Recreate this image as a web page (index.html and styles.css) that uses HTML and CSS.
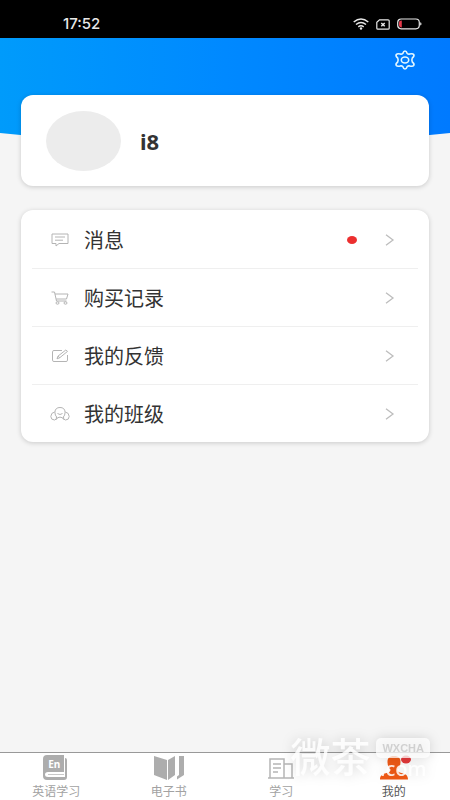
FILE: index.html
```
<!DOCTYPE html>
<html lang="zh-CN">
<head>
<meta charset="utf-8">
<meta name="viewport" content="width=device-width, initial-scale=1">
<title>我的</title>
<link rel="stylesheet" href="styles.css">
</head>
<body>
<div class="status">
  <span class="clock">17:52</span>
  <div class="status-icons">
    <svg width="16" height="12" viewBox="0 0 16 12" fill="none" stroke="#e8e8e8" stroke-width="1.5"><path d="M.7 4Q8-2 15.300 4M3 6.500q5-4 10 0M5.300 8.800q2.700-2 5.400 0"/><circle cx="8" cy="10.500" r="1.200" fill="#e8e8e8" stroke="none"/></svg>
    <svg width="14" height="11" viewBox="0 0 14 11" fill="none" stroke="#e8e8e8" stroke-width="1.200"><path d="M3.500.8H12q1.200 0 1.200 1v7.400q0 1-1.200 1H2q-1.200 0-1.200-1V3.200z"/><path d="m5.300 4 3.400 3.200m0-3.200L5.300 7.200" stroke-width="1.500"/></svg>
    <svg width="25" height="12" viewBox="0 0 25 12"><rect x=".7" y="1" width="21.600" height="9.800" rx="3.500" fill="none" stroke="#e8e8e8" stroke-width="1.200"/><path d="M4.800 2.400v7Q2 9.400 2 7V4.800Q2 2.400 4.800 2.400z" fill="#e5394a"/><path d="M23.200 4.200q1.300.4 1.300 1.700t-1.300 1.700z" fill="#e8e8e8"/></svg>
  </div>
</div>
<main class="page">
  <svg class="hero" viewBox="0 0 450 108" preserveAspectRatio="none" aria-hidden="true">
    <defs><linearGradient id="sky" x1="0" y1="0" x2="450" y2="0" gradientUnits="userSpaceOnUse"><stop offset="0" stop-color="#009bfb"/><stop offset=".5" stop-color="#0089ff"/><stop offset="1" stop-color="#007aff"/></linearGradient></defs>
    <path d="M0 0H450V95Q225 120 0 95z" fill="url(#sky)"/>
  </svg>
  <div class="toolbar">
    <button class="settings" type="button" aria-label="设置">
      <svg width="22" height="20" viewBox="0 0 22 20" fill="none" stroke="#e2f6ff" stroke-width="1.600" stroke-linejoin="round"><path d="M8.800 3.500Q9.500 1 11 1t2.200 2.500q1 .9 2.300.6 3.200-.9 4.200.4 1 1.600-1.400 3.500-.9 2 0 4 2.400 1.900 1.400 3.500-1 1.300-4.200.4-1.300-.3-2.300.6Q12.500 19 11 19t-2.200-2.500q-1-.9-2.300-.6-3.200.9-4.200-.4-1-1.600 1.400-3.500.9-2 0-4-2.400-1.900-1.400-3.500 1-1.300 4.200-.4 1.300.3 2.300-.6z"/><ellipse cx="11" cy="10" rx="3.700" ry="3"/></svg>
    </button>
  </div>
  <section class="card profile">
    <div class="avatar"></div>
    <h1 class="name">i8</h1>
  </section>
  <nav class="card menu">
    <a class="row" href="#messages">
      <svg class="row-icon" width="20" height="16" viewBox="0 0 20 16"><path d="M2 2h16v9.500H9L6 14v-2.500H2zM5 5h10M5 8.200h8"/></svg>
      <span class="row-label">消息</span><span class="dot"></span>
      <svg class="chevron" width="10" height="12" viewBox="0 0 10 12"><path d="m1 .7 7 5.300-7 5.300"/></svg>
    </a>
    <a class="row" href="#orders">
      <svg class="row-icon" width="20" height="16" viewBox="0 0 20 16"><path d="M1.500 2h3l2 9h10M5 4h13l-1.500 5H6.200"/><ellipse cx="7.500" cy="13" rx="1.500" ry="1.200"/><ellipse cx="15.500" cy="13" rx="1.500" ry="1.200"/></svg>
      <span class="row-label">购买记录</span>
      <svg class="chevron" width="10" height="12" viewBox="0 0 10 12"><path d="m1 .7 7 5.300-7 5.300"/></svg>
    </a>
    <a class="row" href="#feedback">
      <svg class="row-icon" width="20" height="16" viewBox="0 0 20 16"><path d="M12 2.500H4q-1.500 0-1.500 1.300v8.400q0 1.300 1.500 1.300h12q1.500 0 1.500-1.300V7M7 10.800l.9-2.600L15.800 2l1.700 1.400-7.700 6.300zM8 8.200l1.800 1.500"/></svg>
      <span class="row-label">我的反馈</span>
      <svg class="chevron" width="10" height="12" viewBox="0 0 10 12"><path d="m1 .7 7 5.300-7 5.300"/></svg>
    </a>
    <a class="row" href="#class">
      <svg class="row-icon" width="20" height="16" viewBox="0 0 20 16"><path d="M4.900 6.200Q5.200 1.500 10 1.500t5.100 4.700M6.800 11.200Q4.900 9.500 4.900 6.200M13.200 11.200q1.900-1.700 1.900-5M7.500 7.500q2.500 2 5 0M4.700 6Q1 6.500.8 10.500 1 14 4.500 14q2.500-.3 2-3M15.300 6q3.700.5 3.900 4.500-.2 3.500-3.700 3.500-2.500-.3-2-3M6.500 13.500q.2-2.200 3.500-2.400 3.300.2 3.500 2.400"/></svg>
      <span class="row-label">我的班级</span>
      <svg class="chevron" width="10" height="12" viewBox="0 0 10 12"><path d="m1 .7 7 5.300-7 5.300"/></svg>
    </a>
  </nav>
</main>
<footer class="tabs">
  <a class="tab" href="#english">
    <span class="book"><svg width="28" height="26" viewBox="0 0 28 26"><path d="M5 0h17v17H6q-3 0-3 2.500T6 22h17V3q2 0 2 2v17q0 3-3 3H5q-4 0-4-4V4q0-4 4-4z" fill="#adadad"/><path d="M6 19.500h16" stroke="#c8c8c8" fill="none"/></svg><b class="book-text">En</b></span>
    <span>英语学习</span>
  </a>
  <a class="tab" href="#ebooks">
    <svg width="32" height="26" viewBox="0 0 32 26" fill="#adadad"><path d="m1 1 13 4v20L1 20zM22 1v19l-7 5V5zM26 1h5v19l-7 4.500v-3l2-1.500z"/></svg>
    <span>电子书</span>
  </a>
  <a class="tab" href="#study">
    <svg width="28" height="26" viewBox="0 0 28 26" fill="none" stroke="#b5b5b5" stroke-width="1.500"><path d="M3 23V4h14v19M17 9h8v14M1 23h26M6 9h8M6 13h8M6 17h5"/></svg>
    <span>学习</span>
  </a>
  <a class="tab active" href="#mine">
    <svg width="34" height="26" viewBox="0 0 34 26"><path d="M17 1c5 0 6.500 2.500 6.500 6 0 4-1.500 6-3 7.500 0 2 1 2.800 4 3.500 5 1 6.500 3 6.500 6.500H3c0-3.500 1.500-5.500 6.500-6.500 3-.7 4-1.500 4-3.500-1.500-1.500-3-3.500-3-7.500 0-3.500 1.500-6 6.500-6z" fill="#f15a16"/><ellipse cx="29" cy="4.500" rx="5" ry="4" fill="#e5393b"/></svg>
    <span>我的</span>
  </a>
</footer>
<div class="watermark" aria-hidden="true">
  <span class="wm-main">微茶</span>
  <div class="wm-side"><span class="wm-bubble">WXCHA</span><span class="wm-com">.com</span></div>
</div>
</body>
</html>
```
FILE: styles.css
```
* { box-sizing: border-box; }
body {
  margin: 0;
  min-height: 100vh;
  display: flex;
  flex-direction: column;
  position: relative;
  background: #f5f5f5;
  color: #333;
  font-family: "Noto Sans", "Noto Sans CJK SC", sans-serif;
}
svg { display: block; flex: none; }
a { color: inherit; text-decoration: none; }
.status {
  height: 38px;
  padding: 10px 28px 0 63px;
  display: flex;
  align-items: center;
  justify-content: space-between;
  background: #000;
}
.clock {
  color: #e8e8e8;
  font: 500 15px/20px Inter, sans-serif;
}
.status-icons { display: flex; align-items: center; gap: 7px; }
.page {
  position: relative;
  flex: 1;
  padding: 0 21px 24px;
}
.hero {
  position: absolute;
  top: 0;
  left: 0;
  width: 100%;
  height: 108px;
}
.toolbar {
  position: relative;
  height: 57px;
  padding: 12px 13px 0 0;
  display: flex;
  justify-content: flex-end;
  align-items: flex-start;
}
.settings { padding: 0; border: 0; background: none; }
.card {
  position: relative;
  background: #fff;
  border-radius: 12px;
  box-shadow: 0 1px 5px rgba(0, 0, 0, .18);
}
.profile {
  height: 91px;
  padding: 0 25px;
  display: flex;
  align-items: center;
  gap: 19px;
}
.avatar {
  width: 75px;
  height: 60px;
  border-radius: 50%;
  background: #ececec;
}
.name {
  margin: 0;
  font-size: 22px;
  line-height: 28px;
  font-weight: 700;
}
.menu { margin-top: 24px; padding: 0 11px; }
.row {
  height: 58px;
  padding: 2px 23px 0 18px;
  display: flex;
  align-items: center;
}
.row + .row { border-top: 1px solid #efefef; padding-top: 0; }
.row-icon { fill: none; stroke: #b4b4b4; stroke-width: 1; }
.row-label {
  flex: 1;
  margin-left: 14px;
  padding-top: 2px;
  font-size: 20px;
  line-height: 28px;
}
.dot {
  width: 10px;
  height: 8px;
  margin-right: 28px;
  border-radius: 50%;
  background: #ec2f2f;
}
.chevron { fill: none; stroke: #bdbdbd; stroke-width: 1.3; }
.tabs {
  height: 48px;
  display: grid;
  grid-template-columns: repeat(4, 1fr);
  border-top: 1px solid #999;
  background: #fff;
}
.tab {
  padding-top: 2px;
  display: flex;
  flex-direction: column;
  align-items: center;
  gap: 3px;
  color: #a2a2a2;
  font-size: 12px;
  line-height: 16px;
}
.active { color: #555; }
.book { position: relative; }
.book-text {
  position: absolute;
  top: 2px;
  left: 6px;
  color: #fff;
  font-size: 10px;
  line-height: 14px;
}
.watermark {
  position: absolute;
  right: 20px;
  bottom: 20px;
  display: flex;
  align-items: flex-end;
  gap: 6px;
  color: rgba(255, 255, 255, .85);
  filter: drop-shadow(0 0 6px rgba(0, 0, 0, .18));
  pointer-events: none;
}
.wm-main { font-size: 40px; line-height: 46px; font-weight: 500; }
.wm-side { display: flex; flex-direction: column; align-items: center; }
.wm-bubble {
  padding: 0 6px;
  border-radius: 5px;
  background: rgba(255, 255, 255, .75);
  color: #d0d0d0;
  font: 700 11px/20px "Liberation Sans", sans-serif;
}
.wm-com { font-size: 20px; line-height: 22px; font-weight: 500; }
```
